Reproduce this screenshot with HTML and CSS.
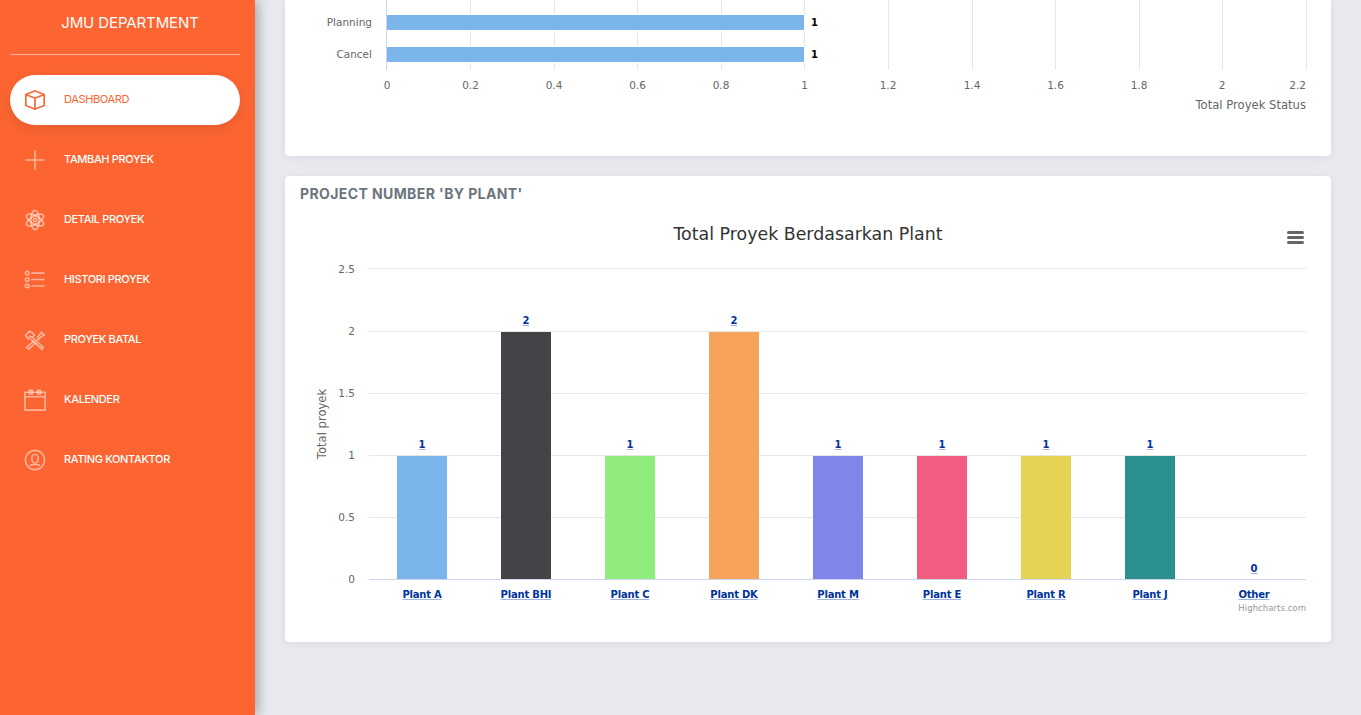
FILE: index.html
```html
<!DOCTYPE html>
<html lang="en">
<head>
  <meta charset="UTF-8" />
  <meta name="viewport" content="width=device-width, initial-scale=1.0" />
  <title>JMU Department - Dashboard</title>
  <link rel="stylesheet" href="styles.css">
</head>

<body>
  <aside class="sidebar">
    <div class="brand">JMU DEPARTMENT</div>
    <nav class="menu">
      <a class="menu-item active" href="#">
        <svg class="menu-icon" viewBox="0 0 24 24"><path d="M2 6 12 2l10 4v12l-10 4-10-4zM2 6l10 4 10-4M12 10v12"/></svg>
        <span>DASHBOARD</span>
      </a>
      <a class="menu-item" href="#">
        <svg class="menu-icon" viewBox="0 0 24 24"><path d="M12 1.500v21M1.500 12h21"/></svg>
        <span>TAMBAH PROYEK</span>
      </a>
      <a class="menu-item" href="#">
        <svg class="menu-icon" viewBox="0 0 24 24"><ellipse cx="12" cy="12" rx="4.500" ry="10.500"/><ellipse cx="12" cy="12" rx="4.500" ry="10.500" transform="rotate(60 12 12)"/><ellipse cx="12" cy="12" rx="4.500" ry="10.500" transform="rotate(-60 12 12)"/><circle cx="12" cy="12" r="1.800"/></svg>
        <span>DETAIL PROYEK</span>
      </a>
      <a class="menu-item" href="#">
        <svg class="menu-icon" viewBox="0 0 24 24"><circle cx="3.500" cy="4.500" r="2"/><circle cx="3.500" cy="11.500" r="2"/><circle cx="3.500" cy="18.500" r="2"/><path d="M8 4.500h14.500M8 11.500h14.500M8 18.500h14.500"/></svg>
        <span>HISTORI PROYEK</span>
      </a>
      <a class="menu-item" href="#">
        <svg class="menu-icon" viewBox="0 0 24 24"><path d="M1.500 7 6 2.500l3 1.500 2.500 2.500L9 9 6.500 8 5 11zM9 9l12 11-1.500 2-12-11"/><path d="M14.500 9.500 19 3.500l3 3-4 2.500-2.500 3zM11 13 3 20l2 2 8-7"/></svg>
        <span>PROYEK BATAL</span>
      </a>
      <a class="menu-item" href="#">
        <svg class="menu-icon" viewBox="0 0 24 24"><path d="M1 3.500h22v19.500H1zM1 8.500h22"/><path d="M6 1.500h3v4H6zM15 1.500h3v4h-3z"/></svg>
        <span>KALENDER</span>
      </a>
      <a class="menu-item" href="#">
        <svg class="menu-icon" viewBox="0 0 24 24"><circle cx="12" cy="12" r="10.500"/><ellipse cx="12" cy="10.500" rx="3.500" ry="4.800"/><path d="M6.500 18c2-1.500 9-1.500 11 0"/></svg>
        <span>RATING KONTAKTOR</span>
      </a>
    </nav>
  </aside>

  <main class="content">
    <section class="card card-status">
      <svg class="chart" viewBox="285 0 1046 156">
        <path class="grid" d="M470.500 0v70M554.500 0v70M637.500 0v70M721.500 0v70M804.500 0v70M888.500 0v70M972.500 0v70M1055.500 0v70M1139.500 0v70M1222.500 0v70M1306.500 0v70"/>
        <rect class="bar-gap" x="388" y="14" width="418" height="17"/>
        <rect class="bar-gap" x="388" y="46" width="418" height="17"/>
        <path class="axis" d="M386.500 0v70"/>
        <rect x="387" y="15" width="417" height="15" fill="#7cb5ec"/>
        <rect x="387" y="47" width="417" height="15" fill="#7cb5ec"/>
        <text class="tick end" x="372" y="26">Planning</text>
        <text class="tick end" x="372" y="58">Cancel</text>
        <text class="bar-value" x="811" y="26">1</text>
        <text class="bar-value" x="811" y="58">1</text>
        <text class="tick mid" x="387" y="89">0</text>
        <text class="tick mid" x="470.500" y="89">0.2</text>
        <text class="tick mid" x="554" y="89">0.4</text>
        <text class="tick mid" x="637.500" y="89">0.6</text>
        <text class="tick mid" x="721" y="89">0.8</text>
        <text class="tick mid" x="804.500" y="89">1</text>
        <text class="tick mid" x="888" y="89">1.2</text>
        <text class="tick mid" x="972" y="89">1.4</text>
        <text class="tick mid" x="1055.500" y="89">1.6</text>
        <text class="tick mid" x="1139" y="89">1.8</text>
        <text class="tick mid" x="1222" y="89">2</text>
        <text class="tick end" x="1306" y="89">2.2</text>
        <text class="axis-title end" x="1306" y="109">Total Proyek Status</text>
      </svg>
    </section>

    <section class="card card-plant">
      <h2 class="card-title">PROJECT NUMBER 'BY PLANT'</h2>
      <svg class="chart" viewBox="285 210 1046 432">
        <text class="chart-title mid" x="808" y="240">Total Proyek Berdasarkan Plant</text>
        <path class="burger" d="M1288.500 232.500h14M1288.500 237.500h14M1288.500 242.500h14"/>

        <path class="grid" d="M369 268.500h937M369 331.500h937M369 393.500h937M369 455.500h937M369 517.500h937"/>
        <path class="axis" d="M369 579.500h937"/>

        <text class="tick end" x="355" y="273">2.5</text>
        <text class="tick end" x="355" y="335">2</text>
        <text class="tick end" x="355" y="397">1.5</text>
        <text class="tick end" x="355" y="459">1</text>
        <text class="tick end" x="355" y="521">0.5</text>
        <text class="tick end" x="355" y="583">0</text>
        <text class="axis-title mid" transform="translate(326 424) rotate(-90)">Total proyek</text>

        <rect x="397" y="456" width="50" height="123" fill="#7cb5ec"/>
        <rect x="501" y="332" width="50" height="247" fill="#434348"/>
        <rect x="605" y="456" width="50" height="123" fill="#90ed7d"/>
        <rect x="709" y="332" width="50" height="247" fill="#f7a35c"/>
        <rect x="813" y="456" width="50" height="123" fill="#8085e9"/>
        <rect x="917" y="456" width="50" height="123" fill="#f15c80"/>
        <rect x="1021" y="456" width="50" height="123" fill="#e4d354"/>
        <rect x="1125" y="456" width="50" height="123" fill="#2b908f"/>

        <text class="link-label mid" x="422" y="448"><tspan>1</tspan></text>
        <text class="link-label mid" x="526" y="324"><tspan>2</tspan></text>
        <text class="link-label mid" x="630" y="448"><tspan>1</tspan></text>
        <text class="link-label mid" x="734" y="324"><tspan>2</tspan></text>
        <text class="link-label mid" x="838" y="448"><tspan>1</tspan></text>
        <text class="link-label mid" x="942" y="448"><tspan>1</tspan></text>
        <text class="link-label mid" x="1046" y="448"><tspan>1</tspan></text>
        <text class="link-label mid" x="1150" y="448"><tspan>1</tspan></text>
        <text class="link-label mid" x="1254" y="572"><tspan>0</tspan></text>

        <text class="link-label mid" x="422" y="598"><tspan>Plant A</tspan></text>
        <text class="link-label mid" x="526" y="598"><tspan>Plant BHI</tspan></text>
        <text class="link-label mid" x="630" y="598"><tspan>Plant C</tspan></text>
        <text class="link-label mid" x="734" y="598"><tspan>Plant DK</tspan></text>
        <text class="link-label mid" x="838" y="598"><tspan>Plant M</tspan></text>
        <text class="link-label mid" x="942" y="598"><tspan>Plant E</tspan></text>
        <text class="link-label mid" x="1046" y="598"><tspan>Plant R</tspan></text>
        <text class="link-label mid" x="1150" y="598"><tspan>Plant J</tspan></text>
        <text class="link-label mid" x="1254" y="598"><tspan>Other</tspan></text>

        <text class="credits end" x="1306" y="611">Highcharts.com</text>
      </svg>
    </section>
  </main>
</body>
</html>
```

FILE: styles.css
```css
* {
  box-sizing: border-box;
}

html, body {
  height: 100%;
}

body {
  margin: 0;
  display: flex;
  overflow: hidden;
  background: #e9eaef;
  font-family: "Inter", "Liberation Sans", sans-serif;
}

/* sidebar */
.sidebar {
  flex: 0 0 255px;
  height: 100vh;
  padding: 0 15px 0 10px;
  background: #fc6532;
  box-shadow: 3px 0 12px rgba(0, 0, 0, 0.3);
}

.brand {
  width: 230px;
  height: 55px;
  padding: 14px 0 0 10px;
  border-bottom: 1px solid rgba(255, 255, 255, 0.5);
  color: #fff;
  font-size: 15px;
  letter-spacing: -0.1px;
  line-height: 18px;
  text-align: center;
}

.menu {
  display: flex;
  flex-direction: column;
  gap: 10px;
  margin-top: 20px;
}

.menu-item {
  display: flex;
  align-items: center;
  gap: 18px;
  height: 50px;
  padding-left: 14px;
  border-radius: 25px;
  color: #fff;
  font-size: 11px;
  font-weight: 500;
  letter-spacing: -0.35px;
  line-height: 12px;
  text-decoration: none;
}

.menu-item span {
  padding-bottom: 2px;
}

.menu-item.active {
  background: #fff;
  color: #fc6532;
  font-weight: 400;
  box-shadow: 0 4px 14px rgba(0, 0, 0, 0.1);
}

.menu-icon {
  flex: none;
  width: 22px;
  height: 22px;
  fill: none;
  stroke: rgba(255, 255, 255, 0.5);
  stroke-width: 1.800;
}

.menu-item.active .menu-icon {
  stroke: #fc6532;
}

/* cards */
.content {
  flex: 1;
  min-width: 0;
  padding: 0 30px;
}

.card {
  background: #fff;
  border-radius: 4px;
  box-shadow: 0 1px 15px rgba(0, 0, 0, 0.04), 0 1px 6px rgba(0, 0, 0, 0.04);
}

.card-status {
  height: 156px;
  border-radius: 0 0 4px 4px;
}

.card-plant {
  height: 466px;
  margin-top: 20px;
}

.card-title {
  height: 34px;
  margin: 0;
  padding: 9px 15px 0;
  color: #6c757d;
  font-size: 14px;
  font-weight: 700;
  letter-spacing: 0.4px;
  line-height: 17px;
}

.chart {
  display: block;
  width: 1046px;
}

.card-status .chart {
  height: 156px;
}

.card-plant .chart {
  height: 432px;
}

/* chart parts */
.chart text {
  font-family: "DejaVu Sans", sans-serif;
}

.mid {
  text-anchor: middle;
}

.end {
  text-anchor: end;
}

.grid {
  fill: none;
  stroke: #e6e6e6;
}

.axis {
  fill: none;
  stroke: #ccd6eb;
}

.bar-gap {
  fill: #fff;
}

.tick {
  fill: #666;
  font-size: 10.500px;
}

.axis-title {
  fill: #666;
  font-size: 11.600px;
}

.bar-value {
  fill: #000;
  font-size: 10px;
  font-weight: 700;
}

.chart-title {
  fill: #333;
  font-size: 17.400px;
}

.burger {
  fill: none;
  stroke: #666;
  stroke-width: 3;
  stroke-linecap: round;
}

/* underline takes the paler fill of the text, glyphs the fill of the tspan */
.link-label {
  fill: #a3b4dc;
  font-size: 10px;
  font-weight: 700;
  letter-spacing: -0.2px;
  text-decoration: underline;
}

.link-label tspan {
  fill: #003399;
}

.credits {
  fill: #999;
  font-size: 8.600px;
}
```
